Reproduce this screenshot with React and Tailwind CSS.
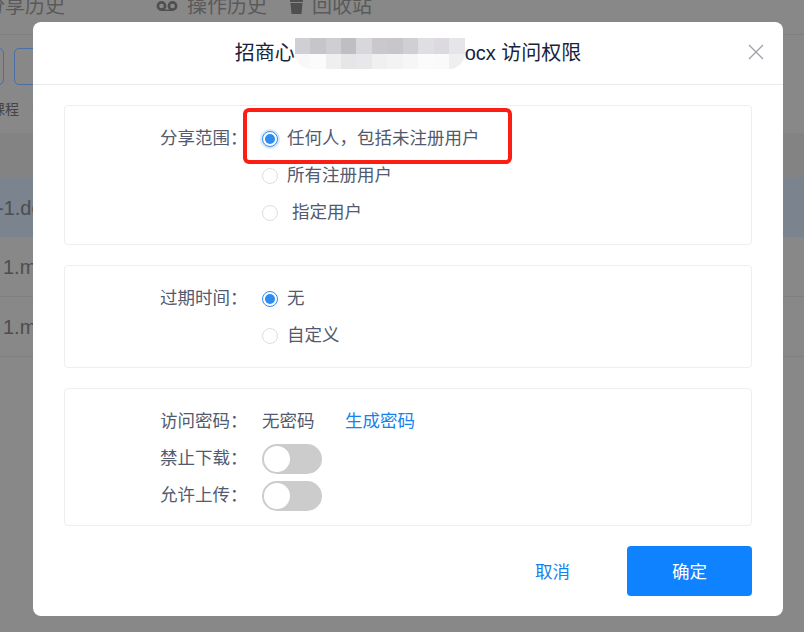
const FONT = "font-['Liberation_Sans','Noto_Sans_CJK_SC',sans-serif]"

const MOSAIC_TOP = ['#d0cfd3', '#c6c5c9', '#cfced3', '#bfbec2', '#d8d8dc', '#cac8cd', '#c8c6cb', '#d0cfd3', '#dfdee2', '#dcdae0', '#e6e6e9']
const MOSAIC_BOTTOM = ['#f8f8f8', '#fbfbfb', '#efeff0', '#e6e6e9', '#e8e8ea', '#f0f0f1', '#f3f3f4', '#f6f6f6', '#fbfbfb', '#fafafa', '#efefef']

function Radio({ checked, focused }) {
  return (
    <span
      className={`w-4 h-4 rounded-full shrink-0 flex items-center justify-center border bg-white ${
        checked ? 'border-[#2d8cf0]' : 'border-[#dcdee2]'
      } ${focused ? 'shadow-[0_0_0_2px_rgba(45,140,240,0.2)]' : ''}`}
    >
      {checked && <span className="w-2.5 h-2.5 rounded-full bg-[#2d8cf0]" />}
    </span>
  )
}

function Option({ label, checked, focused, gap = 'gap-[9px]' }) {
  return (
    <div className={`h-[37px] flex items-center ${gap} text-[#515a6e]`}>
      <Radio checked={checked} focused={focused} />
      <span>{label}</span>
    </div>
  )
}

function Row({ label, children }) {
  return (
    <div className="flex items-start">
      <div className="w-[197px] h-[37px] pl-[95px] flex items-center text-[#515a6e] whitespace-nowrap">{label}</div>
      <div className="flex-1">{children}</div>
    </div>
  )
}

function Toggle() {
  return (
    <div className="h-[37px] flex items-center">
      <span className="w-[60px] h-[30px] rounded-full bg-[#cccccc] p-0.5 flex items-center">
        <span className="w-[26px] h-[26px] rounded-full bg-white" />
      </span>
    </div>
  )
}

function Background() {
  return (
    <div className="h-full bg-[#888888] text-[#4d4d4d] overflow-hidden">
      <div className="h-[35px] border-b border-[#808080] flex items-start text-[20px] leading-[12px] text-[#5a5a5a]">
        <span className="ml-[-15px] w-[171px] shrink-0">分享历史</span>
        <svg width="22" height="10" viewBox="0 0 22 10" className="shrink-0 mr-[9px] mt-[1px]">
          <circle cx="5.5" cy="5" r="3.6" fill="none" stroke="#4f4f4f" strokeWidth="2.6" />
          <circle cx="16.5" cy="5" r="3.6" fill="none" stroke="#4f4f4f" strokeWidth="2.6" />
          <path d="M5 9.3h12" stroke="#4f4f4f" strokeWidth="1.4" />
        </svg>
        <span className="w-[102px] shrink-0">操作历史</span>
        <svg width="15" height="14" viewBox="0 0 15 14" className="shrink-0 mr-2">
          <path d="M1 0h13v2H1zM1.5 3h12l-1 11h-10z" fill="#4f4f4f" />
        </svg>
        <span>回收站</span>
      </div>
      <div className="mt-[13px] h-[37px] flex gap-[10px] ml-[-39px]">
        <span className="w-[43px] rounded-[5px] border border-[#4a6fa5]" />
        <span className="w-[60px] rounded-[5px] border border-[#4a6fa5]" />
      </div>
      <div className="mt-[13px] h-[22px] flex items-center text-sm ml-[-9px] text-[#444444] gap-[13px]">
        <span>课程</span>
        <span className="text-[#777777] text-xs">&gt;</span>
      </div>
      <div className="mt-[13px] h-[45px] bg-[#838383]" />
      <div className="h-[59px] bg-[#7b838e] flex items-center text-[20px] overflow-hidden">
        <span className="ml-[-3px]">-1.docx</span>
      </div>
      <div className="h-[60px] border-b border-[#808080] flex items-center text-[20px] overflow-hidden">
        <span className="ml-[3px]">1.mp4</span>
      </div>
      <div className="h-[60px] border-b border-[#808080] flex items-center text-[20px] overflow-hidden">
        <span className="ml-[3px]">1.mp4</span>
      </div>
    </div>
  )
}

export default function App() {
  return (
    <div className={`relative w-[804px] h-[632px] overflow-hidden ${FONT}`}>
      <Background />

      <div className="absolute left-[33px] top-[22px] w-[750px] h-[594px] bg-white rounded-lg flex flex-col">
        <div className="relative h-[63px] shrink-0 border-b border-[#e8eaec] flex items-center justify-center text-[20px] text-[#17233d]">
          <div className="flex items-center">
            <span>招商心</span>
            <span className="relative z-10 w-[170px] h-[31px] flex flex-col overflow-hidden rounded-b-[16px]">
              <span className="flex h-[16px]">
                {MOSAIC_TOP.map((c, i) => (
                  <span key={i} className="flex-1" style={{ background: c }} />
                ))}
              </span>
              <span className="flex h-[15px]">
                {MOSAIC_BOTTOM.map((c, i) => (
                  <span key={i} className="flex-1" style={{ background: c }} />
                ))}
              </span>
            </span>
            <span>ocx 访问权限</span>
          </div>
          <svg width="16" height="16" viewBox="0 0 16 16" className="absolute right-[19px] top-[22px]">
            <path d="M1 1l14 14M15 1L1 15" stroke="#9a9ea6" strokeWidth="1.2" fill="none" />
          </svg>
        </div>

        <div className="px-[31px] pt-5 text-[17.5px] flex flex-col gap-5 w-[750px]">
          <section className="w-[688px] h-[140px] border border-[#eeeeee] rounded-sm pt-[14px]">
            <Row label="分享范围：">
              <Option label="任何人，包括未注册用户" checked focused />
              <Option label="所有注册用户" />
              <Option label="指定用户" gap="gap-[14px]" />
            </Row>
          </section>

          <section className="w-[688px] h-[103px] border border-[#eeeeee] rounded-sm pt-[14px]">
            <Row label="过期时间：">
              <Option label="无" checked />
              <Option label="自定义" />
            </Row>
          </section>

          <section className="w-[688px] h-[138px] border border-[#eeeeee] rounded-sm pt-[14px]">
            <Row label="访问密码：">
              <div className="h-[37px] flex items-center text-[#515a6e]">
                <span className="w-[83px]">无密码</span>
                <span className="text-[#1482f0]">生成密码</span>
              </div>
            </Row>
            <Row label="禁止下载：">
              <Toggle />
            </Row>
            <Row label="允许上传：">
              <Toggle />
            </Row>
          </section>

          <div className="w-[688px] flex items-center justify-end">
            <span className="mr-[57px] pt-[2px] text-[#1482f0]">取消</span>
            <span className="w-[125px] h-[50px] pt-[2px] rounded-sm bg-[#0f82ff] text-white flex items-center justify-center">确定</span>
          </div>
        </div>
      </div>

      <div className="absolute left-[243px] top-[108px] w-[269px] h-[56px] border-4 border-[#fa1e14] rounded-md" />
    </div>
  )
}
